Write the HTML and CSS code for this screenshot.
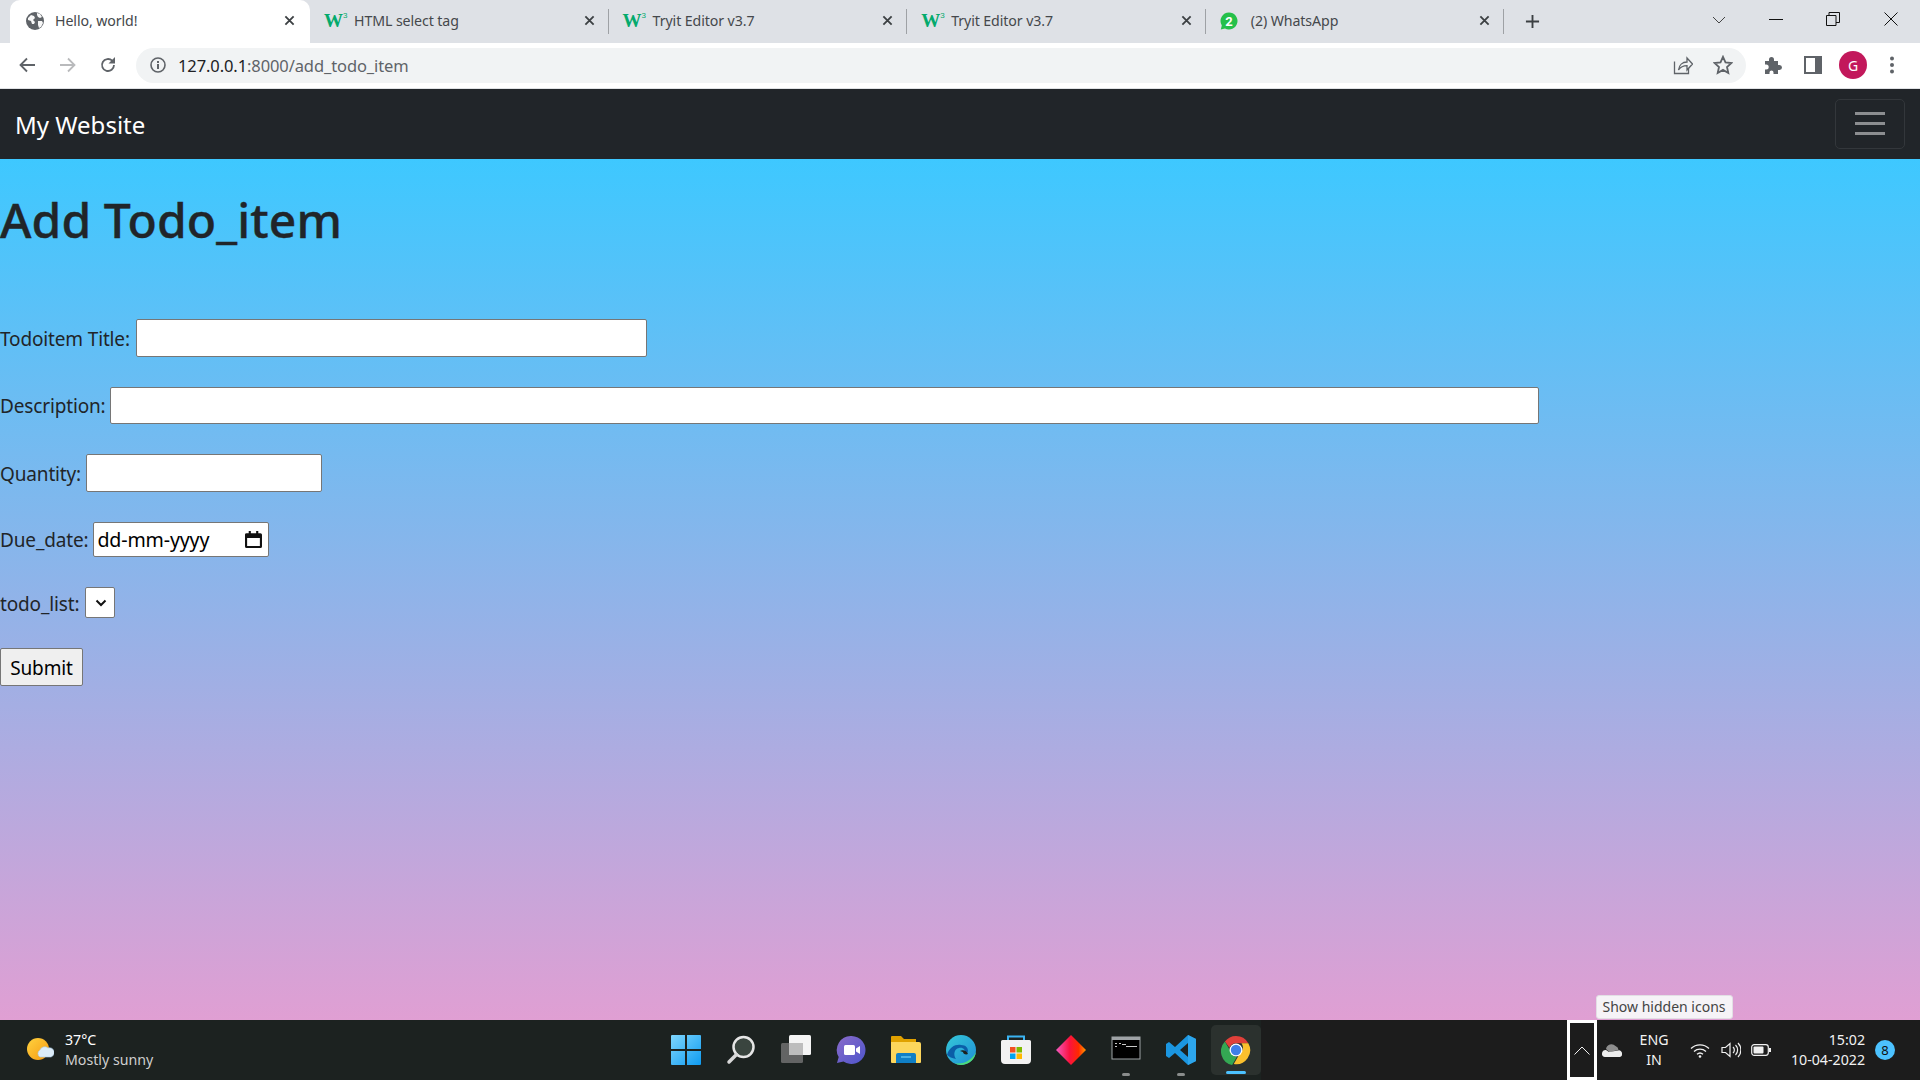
FILE: index.html
```html
<!DOCTYPE html>
<html lang="en">
<head>
<meta charset="utf-8">
<title>Hello, world!</title>
<link rel="stylesheet" href="styles.css">
</head>
<body>
<header class="chrome">
  <div class="tabstrip">
    <div class="tab tab-active">
      <svg class="fav" viewBox="0 0 18 18"><circle cx="9" cy="9" r="9" fill="#5f6368"/><path d="M2 6l3-3 3 1 1 2-2 2 2 2-1 2H6L5 9 2 8z M11 1l3 1 2 3-2 1-2-1-1-2z M12 9l4 0 1 2-2 4-2 1-1-3z" fill="#fff" fill-opacity=".95"/></svg>
      <span class="tab-title">Hello, world!</span>
      <svg class="tab-x" viewBox="0 0 12 12"><path d="M1.5 1.5l9 9m0-9l-9 9" stroke="#3c4043" stroke-width="2"/></svg>
    </div>
    <div class="tab tab-sep">
      <span class="w3">W<sup>3</sup></span>
      <span class="tab-title">HTML select tag</span>
      <svg class="tab-x" viewBox="0 0 12 12"><path d="M1.5 1.5l9 9m0-9l-9 9" stroke="#3c4043" stroke-width="2"/></svg>
    </div>
    <div class="tab tab-sep">
      <span class="w3">W<sup>3</sup></span>
      <span class="tab-title">Tryit Editor v3.7</span>
      <svg class="tab-x" viewBox="0 0 12 12"><path d="M1.5 1.5l9 9m0-9l-9 9" stroke="#3c4043" stroke-width="2"/></svg>
    </div>
    <div class="tab tab-sep">
      <span class="w3">W<sup>3</sup></span>
      <span class="tab-title">Tryit Editor v3.7</span>
      <svg class="tab-x" viewBox="0 0 12 12"><path d="M1.5 1.5l9 9m0-9l-9 9" stroke="#3c4043" stroke-width="2"/></svg>
    </div>
    <div class="tab tab-sep">
      <svg class="fav fav-wa" viewBox="0 0 18 18"><path d="M9 .5a8.5 8.5 0 1 1-4 16L.8 17.4l1-4A8.5 8.5 0 0 1 9 .5z" fill="#25c04a"/><text x="9" y="13.5" class="wa-num">2</text></svg>
      <span class="tab-title">(2) WhatsApp</span>
      <svg class="tab-x" viewBox="0 0 12 12"><path d="M1.5 1.5l9 9m0-9l-9 9" stroke="#3c4043" stroke-width="2"/></svg>
    </div>
    <svg class="newtab" viewBox="0 0 16 16"><path d="M8 1v14M1 8h14" stroke="#3c4043" stroke-width="2"/></svg>
    <div class="winctl">
      <svg class="ctl ctl-chev" viewBox="0 0 14 8"><path d="M1 1l6 6 6-6" fill="none" stroke="#444" stroke-width="1"/></svg>
      <svg class="ctl ctl-min" viewBox="0 0 14 14"><path d="M0 7.5h14" stroke="#111" stroke-width="1"/></svg>
      <svg class="ctl ctl-res" viewBox="0 0 14 14"><path d="M.5 3.5h9.500v10H.5zM3 3.500V.5h10.500v10H10" fill="none" stroke="#111" stroke-width="1"/></svg>
      <svg class="ctl ctl-x" viewBox="0 0 14 14"><path d="M.5.5l13 13m0-13l-13 13" stroke="#111" stroke-width="1"/></svg>
    </div>
  </div>
  <div class="toolbar">
    <svg class="tool tool-back" viewBox="0 0 16 16"><path d="M16 8H2M8 1.500L1.500 8 8 14.500" fill="none" stroke="#5f6368" stroke-width="1.800"/></svg>
    <svg class="tool tool-fwd" viewBox="0 0 16 16"><path d="M0 8h14M8 1.500L14.500 8 8 14.500" fill="none" stroke="#b9babc" stroke-width="1.800"/></svg>
    <svg class="tool tool-reload" viewBox="0 0 16 16"><path d="M14 8a6 6 0 1 1-1.800-4.300" fill="none" stroke="#5f6368" stroke-width="1.800"/><path d="M15 0v6.500H8.500z" fill="#5f6368"/></svg>
    <div class="omnibox">
      <svg class="info" viewBox="0 0 16 16"><circle cx="8" cy="8" r="7" fill="none" stroke="#5f6368" stroke-width="1.600"/><path d="M7 7h2v5H7zM7 4h2v2H7z" fill="#5f6368"/></svg>
      <span class="url"><span class="url-host">127.0.0.1</span>:8000/add_todo_item</span>
      <svg class="omni-ic omni-share" viewBox="0 0 20 20"><path d="M1.500 6.500v12h14V13" fill="none" stroke="#5f6368" stroke-width="1.300"/><path d="M5.500 15c.5-5 4-8 8.500-8V3l5.500 6-5.500 6v-4.300c-3.500 0-6.500 1.300-8.500 4.300z" fill="none" stroke="#5f6368" stroke-width="1.300"/></svg>
      <svg class="omni-ic omni-star" viewBox="0 0 20 20"><path d="M10 1.800l2.500 5.600 6 .6-4.500 4 1.300 6-5.300-3.100L4.700 18l1.300-6L1.500 8l6-.6z" fill="none" stroke="#5f6368" stroke-width="1.800"/></svg>
    </div>
    <svg class="act act-puzzle" viewBox="0 0 18 18"><path d="M1 5h4V3.500a2.500 2.500 0 0 1 5 0V5h4v4h1.500a2.500 2.500 0 0 1 0 5H14v4H9.500v-1.500a2 2 0 0 0-4 0V18H1v-4.500h1.200a2.500 2.500 0 0 0 0-5H1z" fill="#5f6368"/></svg>
    <svg class="act act-panel" viewBox="0 0 18 18"><path d="M0 0h18v18H0z" fill="#5f6368"/><path d="M2 2h9v14H2z" fill="#fff"/></svg>
    <div class="avatar">G</div>
    <svg class="act act-dots" viewBox="0 0 4 18"><circle cx="2" cy="2.500" r="2" fill="#5f6368"/><circle cx="2" cy="9" r="2" fill="#5f6368"/><circle cx="2" cy="15.500" r="2" fill="#5f6368"/></svg>
  </div>
</header>

<nav class="navbar">
  <a class="brand">My Website</a>
  <div class="toggler"><span></span><span></span><span></span></div>
</nav>

<main class="page">
  <h1 class="title">Add Todo_item</h1>
  <form class="todo-form">
    <label class="row row-wide"><span class="lbl">Todoitem Title:</span><input class="field field-title" type="text"></label>
    <label class="row row-tight"><span class="lbl">Description:</span><input class="field field-desc" type="text"></label>
    <label class="row"><span class="lbl">Quantity:</span><input class="field field-qty" type="text"></label>
    <div class="row"><span class="lbl">Due_date:</span>
      <div class="field field-date"><span>dd-mm-yyyy</span>
        <svg class="cal" viewBox="0 0 16 16"><path d="M1.500 3h13a.5.5 0 0 1 .5.500v11a.5.5 0 0 1-.5.5h-13a.5.5 0 0 1-.5-.5v-11a.5.5 0 0 1 .5-.5z" fill="none" stroke="#111" stroke-width="2"/><path d="M1 3h14v3.500H1zM3.500 0h2v3h-2zM10.500 0h2v3h-2z" fill="#111"/></svg>
      </div>
    </div>
    <div class="row row-wide"><span class="lbl lbl-low">todo_list:</span>
      <div class="field field-select"><svg class="chev" viewBox="0 0 12 8"><path d="M1.500 1.500L6 6l4.500-4.500" fill="none" stroke="#111" stroke-width="2"/></svg></div>
    </div>
    <div class="row"><button class="submit" type="button"><span class="lbl-low">Submit</span></button></div>
  </form>
</main>

<footer class="taskbar">
  <div class="tb-left">
    <svg class="weather" viewBox="0 0 28 28"><defs><linearGradient id="sun" x1="0" y1="0" x2="1" y2="1"><stop offset="0" stop-color="#ffd23f"/><stop offset="1" stop-color="#f59a12"/></linearGradient></defs><circle cx="12" cy="13" r="11" fill="url(#sun)"/><path d="M14 21a4 4 0 0 1 0-7 5 5 0 0 1 8-2 4.500 4.500 0 0 1 3 9z" fill="#dcecf8" stroke="#a9cbe4" stroke-width=".6"/></svg>
    <div class="wx-text"><div class="wx-temp">37°C</div><div class="wx-desc">Mostly sunny</div></div>
  </div>
  <div class="tb-center">
    <div class="tb-app"><svg viewBox="0 0 30 30"><defs><linearGradient id="win" x1="0" y1="0" x2="1" y2="1"><stop offset="0" stop-color="#7fd7ff"/><stop offset="1" stop-color="#0f9bf0"/></linearGradient></defs><path d="M0 1a1 1 0 0 1 1-1h13v14H0zM16 0h13a1 1 0 0 1 1 1v13H16zM0 16h14v14H1a1 1 0 0 1-1-1zM16 16h14v13a1 1 0 0 1-1 1H16z" fill="url(#win)"/></svg></div>
    <div class="tb-app"><svg viewBox="0 0 30 30"><circle cx="17.500" cy="12" r="10" fill="#3a453f" stroke="#e6e6e6" stroke-width="2.500"/><path d="M10.500 19.500L3 27" stroke="#d8d8d8" stroke-width="3.500" stroke-linecap="round"/></svg></div>
    <div class="tb-app"><svg viewBox="0 0 30 30"><rect x="8" y="0" width="22" height="20" rx="1.500" fill="#f4f4f4"/><rect x="0" y="8" width="22" height="20" rx="1.500" fill="#6b6b6b" fill-opacity=".9"/><rect x="8" y="8" width="14" height="12" fill="#bdbdbd"/></svg></div>
    <div class="tb-app"><svg viewBox="0 0 30 30"><defs><linearGradient id="chat" x1="0" y1="0" x2="1" y2="1"><stop offset="0" stop-color="#8a6bc9"/><stop offset="1" stop-color="#4d55cc"/></linearGradient></defs><path d="M15.500 1a14 14 0 1 1-8 25.500L1 28l1.700-6A14 14 0 0 1 15.500 1z" fill="url(#chat)"/><rect x="8" y="10" width="11" height="10" rx="1.500" fill="#fff"/><path d="M20 13.500l4-2.500v8l-4-2.500z" fill="#fff"/></svg></div>
    <div class="tb-app"><svg viewBox="0 0 30 30"><path d="M0 2a1 1 0 0 1 1-1h9l3 3h12v5H0z" fill="#e0a100"/><path d="M0 7h28a2 2 0 0 1 2 2v18a1 1 0 0 1-1 1H1a1 1 0 0 1-1-1z" fill="#fcd65c"/><path d="M5 20a2 2 0 0 1 2-2h16a2 2 0 0 1 2 2v8H5z" fill="#0f7fc6"/><path d="M10 22h10" stroke="#5ec0ee" stroke-width="1.500"/></svg></div>
    <div class="tb-app"><svg viewBox="0 0 30 30"><defs><linearGradient id="edge" x1="0" y1="0" x2="1" y2="1"><stop offset="0" stop-color="#35c8d8"/><stop offset="1" stop-color="#1f8ed6"/></linearGradient></defs><circle cx="15" cy="15" r="15" fill="url(#edge)"/><path d="M1 20c2-8 9-11 14-10 5 0 7 3 7 6 0 2-2 3-3 3 1-4-2-7-6-6-5 1-6 7-3 11-4-1-7-2-9-4z" fill="#0b5ea8"/><path d="M30 17c-1 8-8 13-15 13-3 0-5-1-6-2 3 1 9 1 14-3 3-2 5-4 7-8z" fill="#4ddc7a"/><path d="M14 16c3-2 7 0 8 3-2 1-5 0-5-2z" fill="#1c2220"/></svg></div>
    <div class="tb-app"><svg viewBox="0 0 30 30"><path d="M7 6V1.500h16V6" fill="none" stroke="#3ab4f2" stroke-width="2"/><path d="M1.500 5h27a1.500 1.500 0 0 1 1.500 1.500V25a4 4 0 0 1-4 4H4a4 4 0 0 1-4-4V6.500A1.500 1.500 0 0 1 1.500 5z" fill="#f2f2f2"/><rect x="9" y="12" width="5.500" height="5.500" fill="#f25022"/><rect x="15.500" y="12" width="5.500" height="5.500" fill="#7fba00"/><rect x="9" y="18.500" width="5.500" height="5.500" fill="#00a4ef"/><rect x="15.500" y="18.500" width="5.500" height="5.500" fill="#ffb900"/></svg></div>
    <div class="tb-app"><svg viewBox="0 0 30 30"><defs><linearGradient id="dia" x1="0" y1="0" x2="1" y2="0"><stop offset="0" stop-color="#f25bc0"/><stop offset=".45" stop-color="#fa1240"/><stop offset=".75" stop-color="#ff2a00"/><stop offset="1" stop-color="#ff9a00"/></linearGradient></defs><path d="M15 0l15 15-15 15L0 15z" fill="url(#dia)"/></svg></div>
    <div class="tb-app tb-running"><svg viewBox="0 0 30 30"><rect x="1" y="2" width="28" height="22" fill="#000" stroke="#9ea3a6" stroke-width="1"/><rect x="1" y="2" width="28" height="3" fill="#9ea3a6"/><path d="M4 8h2v1H4zM4 11h2v1H4zM8 8h2v1H8zM11 9h4v1h-4zM15 11h11v1H15z" fill="#c8c8c8"/></svg><i class="dot"></i></div>
    <div class="tb-app tb-running"><svg viewBox="0 0 30 30"><path d="M22 0l8 4v22l-8 4-13-12-6 5-3-2V9l3-2 6 5zM22 8l-8 7 8 7z" fill="#1b96e0"/><path d="M22 0l8 4v22l-8 4z" fill="#2da6ec"/></svg><i class="dot"></i></div>
    <div class="tb-app tb-active"><svg viewBox="0 0 30 30"><path d="M15 1a14 14 0 0 1 12.300 7.300H15a7 7 0 0 0-6.500 4.500L3.900 6.600A14 14 0 0 1 15 1z" fill="#e0403a"/><path d="M3.900 6.600l6 10.300A7 7 0 0 0 15.800 22l-4.700 8A14 14 0 0 1 3.900 6.600z" fill="#34a853"/><path d="M27.300 8.300A14 14 0 0 1 12.800 29l6-10.500A7 7 0 0 0 20.500 8.300z" fill="#fbc02d"/><circle cx="15" cy="15" r="6.500" fill="#fff"/><circle cx="15" cy="15" r="5.200" fill="#3f7fe8"/></svg><i class="dot dot-active"></i></div>
  </div>
  <div class="tb-right">
    <div class="tooltip">Show hidden icons</div>
    <div class="tray-focus"><svg viewBox="0 0 16 9"><path d="M.5 8.500L8 1l7.500 7.500" fill="none" stroke="#f0f0f0" stroke-width="1"/></svg></div>
    <svg class="onedrive" viewBox="0 0 20 14"><path d="M4 6a5.500 5.500 0 0 1 9.500-3 4.500 4.500 0 0 1 3 4l-9 2z" fill="#8d8d8d"/><path d="M0 10.500a3.500 3.500 0 0 1 4-3.500l3 2 9-1.500a3 3 0 0 1 4 3 3 3 0 0 1-2 3.500H3a3 3 0 0 1-3-3.500z" fill="#ededed"/></svg>
    <div class="lang"><div>ENG</div><div>IN</div></div>
    <svg class="t-wifi" viewBox="0 0 20 15"><path d="M1 5.500a13 13 0 0 1 18 0M4 8.500a9 9 0 0 1 12 0M7 11.300a4.500 4.500 0 0 1 6 0" fill="none" stroke="#f0f0f0" stroke-width="1.300"/><circle cx="10" cy="13.500" r="1.300" fill="#f0f0f0"/></svg>
    <svg class="t-vol" viewBox="0 0 20 16"><path d="M1 5.500h3.500L9 1.500v13l-4.500-4H1z" fill="none" stroke="#f0f0f0" stroke-width="1.200"/><path d="M12 5a4 4 0 0 1 0 6M14.500 3a7 7 0 0 1 0 10M17 1a10 10 0 0 1 0 14" fill="none" stroke="#f0f0f0" stroke-width="1.200"/></svg>
    <svg class="t-bat" viewBox="0 0 20 12"><rect x=".7" y=".7" width="16.600" height="10.600" rx="2.500" fill="none" stroke="#f0f0f0" stroke-width="1.200"/><rect x="2.500" y="2.500" width="10" height="7" rx="1" fill="#f0f0f0"/><rect x="18" y="4" width="2" height="4" fill="#f0f0f0"/></svg>
    <div class="clock"><div>15:02</div><div>10-04-2022</div></div>
    <div class="notif">8</div>
  </div>
</footer>
</body>
</html>
```

FILE: styles.css
```css
* { box-sizing: border-box; }
html, body { margin: 0; height: 100%; }
body {
  width: 1920px;
  height: 1080px;
  overflow: hidden;
  display: flex;
  flex-direction: column;
  font-family: "Noto Sans", Roboto, sans-serif;
  color: #212529;
}

/* browser chrome */
.chrome { flex: none; background: #fff; }
.tabstrip {
  height: 43px;
  background: #dee1e6;
  display: flex;
  padding-left: 10px;
}
.tab {
  flex: none;
  width: 298.6px;
  height: 43px;
  display: flex;
  align-items: center;
  padding: 0 13px 2px 15px;
  position: relative;
  font-size: 14.2px;
  letter-spacing: -.1px;
  color: #45484c;
}
.tab-active {
  width: 300px;
  background: #fff;
  border-radius: 10px 10px 0 0;
  padding: 0 15px 2px 16px;
}
.tab-sep { border-right: 1px solid #9ea1a5; height: 25px; margin-top: 9px; padding-left: 14px; }
.fav { width: 18px; height: 18px; flex: none; margin-right: 11px; }
.fav-wa { margin-right: 13px; }
.wa-num { font: 700 13px Roboto, sans-serif; fill: #fff; text-anchor: middle; }
.w3 {
  flex: none;
  width: 30px;
  font: 700 19px "Liberation Serif", serif;
  color: #04aa6d;
  line-height: 20px;
  letter-spacing: -1px;
}
.w3 sup { font: 400 8px "Liberation Sans", sans-serif; vertical-align: 9px; margin-left: 1px; line-height: 0; }
.tab-title { flex: 1; white-space: nowrap; }
.tab-x { width: 11px; height: 11px; flex: none; }
.newtab { flex: none; width: 15px; height: 15px; margin: 14px 0 0 21px; }
.winctl { flex: 1; display: flex; align-items: flex-start; position: relative; }
.ctl { flex: none; }
.ctl-chev { width: 14px; height: 8px; margin: 16px 0 0 172px; }
.ctl-min { width: 14px; height: 14px; margin: 12px 0 0 43px; }
.ctl-res { width: 14px; height: 14px; margin: 12px 0 0 43px; }
.ctl-x { width: 14px; height: 14px; margin: 12px 0 0 44px; }

.toolbar {
  height: 46px;
  display: flex;
  align-items: center;
  border-bottom: 1px solid #e0e2e5;
  padding: 0 0 1px 19px;
}
.tool { flex: none; width: 16px; height: 16px; }
.tool-fwd { margin-left: 25px; }
.tool-reload { margin-left: 24px; }
.omnibox {
  flex: none;
  width: 1610px;
  height: 35px;
  margin-left: 20px;
  border-radius: 18px;
  background: #f1f3f4;
  display: flex;
  align-items: center;
  padding: 0 13px 0 14px;
}
.info { width: 16px; height: 16px; flex: none; }
.url { flex: 1; margin-left: 12px; font-size: 16.5px; letter-spacing: -.1px; color: #5f6368; }
.url-host { color: #202124; }
.omni-ic { width: 20px; height: 20px; flex: none; }
.omni-star { margin-left: 20px; }
.act { flex: none; width: 18px; height: 18px; }
.act-puzzle { margin-left: 18px; }
.act-panel { margin-left: 22px; }
.avatar {
  flex: none;
  width: 28px;
  height: 28px;
  margin-left: 17px;
  border-radius: 50%;
  background: #c2185b;
  color: #fff;
  font-size: 14px;
  display: flex;
  align-items: center;
  justify-content: center;
}
.act-dots { width: 4px; margin-left: 23px; }

/* site nav */
.navbar {
  flex: none;
  height: 70px;
  background: #212529;
  display: flex;
  align-items: center;
  justify-content: space-between;
  padding: 0 15px;
}
.brand { color: #fff; font-size: 24px; }
.toggler {
  width: 70px;
  height: 50px;
  border: 1px solid #33373b;
  border-radius: 5px;
  display: flex;
  flex-direction: column;
  align-items: center;
  justify-content: center;
  gap: 7.5px;
  margin-top: -1px;
}
.toggler span { width: 30px; height: 2.5px; background: #8c8e90; }

/* page */
.page {
  flex: 1;
  min-height: 0;
  background: linear-gradient(180deg, #3ec8ff 0%, #e09fd3 100%);
  font-size: 19px;
  letter-spacing: -.15px;
}
.title { margin: 0; padding-top: 31px; font-size: 48px; font-weight: 500; line-height: 60px; letter-spacing: .1px; -webkit-text-stroke: .4px #212529; }
.todo-form { display: flex; flex-direction: column; gap: 30px; margin-top: 69px; }
.row { display: flex; align-items: center; gap: 5px; }
.row-wide { gap: 6px; }
.row-tight { gap: 4px; }
.lbl { padding-top: 1px; }
.lbl-low { padding-top: 2px; display: block; }
.field {
  background: #fff;
  border: 1px solid #767676;
  border-radius: 2px;
  padding: 0;
  margin: 0;
  display: block;
}
.field-title { width: 511px; height: 38px; }
.field-desc { width: 1429px; height: 37px; }
.field-qty { width: 236px; height: 38px; }
.field-date {
  width: 176px;
  height: 35px;
  display: flex;
  align-items: center;
  justify-content: space-between;
  padding: 0 6px 0 3px;
  color: #000;
  font-size: 19.6px;
}
.cal { width: 17px; height: 17px; }
.field-select {
  width: 30px;
  height: 31px;
  display: flex;
  align-items: center;
  justify-content: center;
}
.chev { width: 12px; height: 8px; margin-left: 2px; }
.submit {
  width: 83px;
  height: 38px;
  padding: 0;
  font: inherit;
  letter-spacing: inherit;
  color: #000;
  background: #efefef;
  border: 1px solid #767676;
  border-radius: 2px;
}

/* taskbar */
.taskbar {
  flex: none;
  height: 60px;
  background: #1c2220;
  display: grid;
  grid-template-columns: 1fr auto 1fr;
  align-items: center;
  color: #fff;
}
.tb-left { display: flex; align-items: center; padding-left: 26px; gap: 11px; }
.weather { width: 28px; height: 28px; }
.wx-text { font-size: 14.2px; line-height: 20px; }
.wx-desc { color: #cfcfcf; }
.tb-center { display: flex; gap: 5px; height: 60px; align-items: center; margin-left: 1px; }
.tb-app {
  width: 50px;
  height: 50px;
  display: flex;
  align-items: center;
  justify-content: center;
  position: relative;
}
.tb-app svg { width: 30px; height: 30px; }
.tb-active { background: #2b312e; border-radius: 5px; }
.dot { position: absolute; left: 21px; bottom: -1px; width: 8px; height: 3px; border-radius: 2px; background: #8a8d8c; }
.dot-active { left: 15px; bottom: 1px; width: 20px; background: #4cc2ff; }
.tb-right {
  height: 60px;
  display: flex;
  align-items: center;
  justify-content: flex-end;
  background: #1c1c1c;
  padding-right: 25px;
  position: relative;
  color: #f2f2f2;
  font-size: 14.2px;
}
.tooltip {
  position: absolute;
  left: 335px;
  top: -25px;
  width: 137px;
  height: 24px;
  background: #f6f3f7;
  border: 1px solid #e2dfe4;
  border-radius: 3px;
  color: #444;
  font-size: 14px;
  line-height: 22px;
  text-align: center;
  white-space: nowrap;
}
.tray-focus {
  width: 30px;
  height: 60px;
  border: 3px solid #fff;
  background: #1c1c1c;
  display: flex;
  align-items: center;
  justify-content: center;
  margin-right: 5px;
}
.tray-focus svg { width: 16px; height: 9px; }
.onedrive { width: 20px; height: 14px; margin-right: 17px; }
.lang { width: 30px; text-align: center; line-height: 20px; margin-right: 21px; }
.t-wifi { width: 20px; height: 15px; margin-right: 11px; }
.t-vol { width: 20px; height: 16px; margin-right: 10px; }
.t-bat { width: 20px; height: 12px; margin-right: 18px; }
.clock { width: 76px; text-align: right; line-height: 20px; margin-right: 10px; white-space: nowrap; }
.notif {
  width: 20px;
  height: 20px;
  border-radius: 50%;
  background: #4cc2ff;
  color: #111;
  font-size: 13px;
  display: flex;
  align-items: center;
  justify-content: center;
}
```
